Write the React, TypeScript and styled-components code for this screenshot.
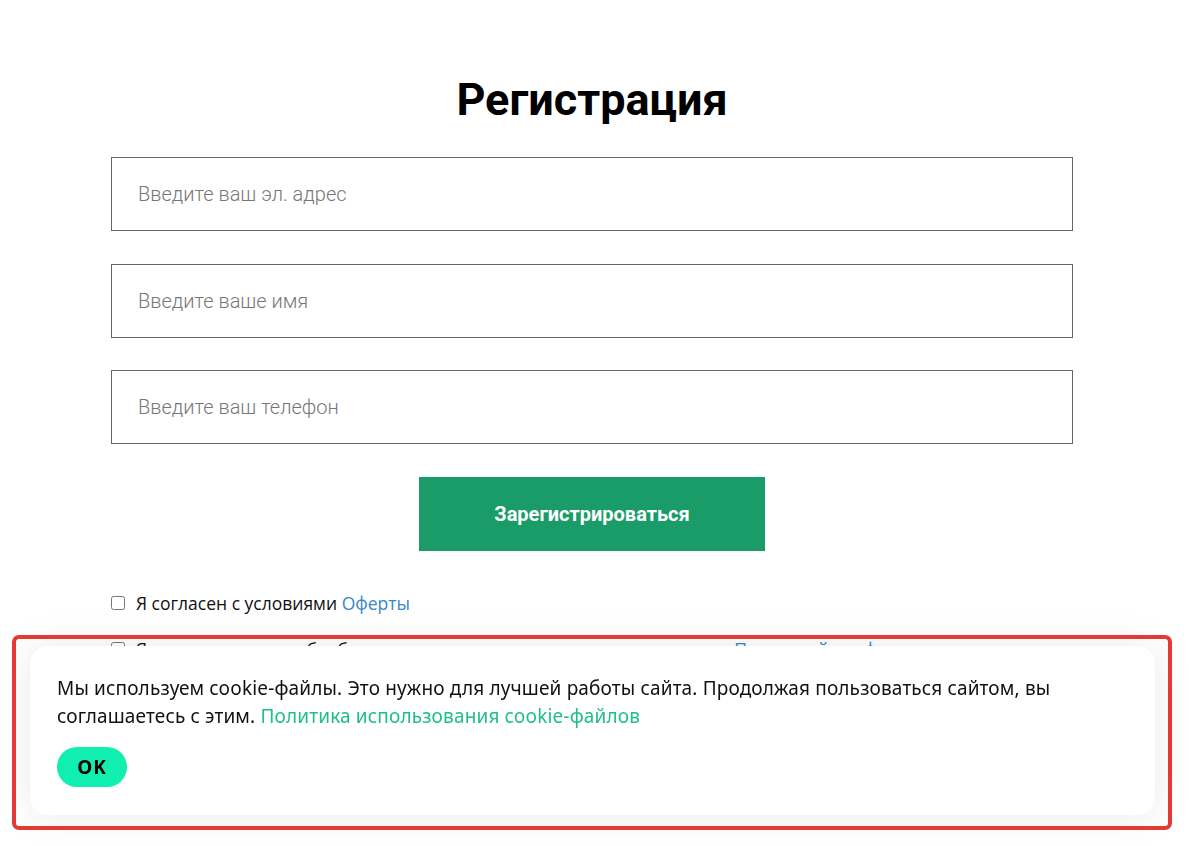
import styled, { createGlobalStyle } from 'styled-components';

const GlobalStyle = createGlobalStyle`
  html, body {
    margin: 0;
    padding: 0;
    background: #ffffff;
  }
  * {
    box-sizing: border-box;
  }
`;

const Page = styled.main`
  width: 962px;
  margin: 0 0 0 111px;
  padding-top: 70px;
  display: flex;
  flex-direction: column;
  font-family: Roboto, 'Liberation Sans', sans-serif;
`;

const Title = styled.h1`
  margin: 0 0 27px;
  text-align: center;
  font-size: 45px;
  line-height: 60px;
  font-weight: 700;
  color: #000;
`;

const Form = styled.form`
  display: flex;
  flex-direction: column;
  gap: 32.5px;
`;

const Field = styled.input`
  height: 74px;
  width: 100%;
  padding: 0 26px;
  border: 1px solid #666;
  border-radius: 0;
  font-family: Roboto, 'Liberation Sans', sans-serif;
  font-size: 20px;
  font-weight: 300;
  color: #333;
  outline: none;

  &::placeholder {
    color: #777;
  }
`;

const Submit = styled.button.attrs({ type: 'button' })`
  align-self: center;
  width: 346px;
  height: 74px;
  border: none;
  background: #1a9c69;
  color: #fff;
  font-family: Roboto, 'Liberation Sans', sans-serif;
  font-size: 20px;
  font-weight: 700;
  cursor: pointer;
`;

const Agreements = styled.div`
  margin-top: 38px;
  display: flex;
  flex-direction: column;
  gap: 18px;
`;

const Check = styled.label`
  display: flex;
  align-items: center;
  gap: 11px;
  font-family: 'Open Sans', 'Noto Sans', sans-serif;
  font-size: 17.5px;
  line-height: 28px;
  color: #111;

  input {
    margin: 0;
    width: 14px;
    height: 14px;
  }
`;

const TextLink = styled.a`
  color: #3a86c8;
  text-decoration: none;
`;

const Banner = styled.div`
  position: fixed;
  left: 30px;
  right: 34px;
  bottom: 31px;
  padding: 28px 27px;
  background: #fff;
  border-radius: 18px;
  box-shadow: 0 0 40px rgba(0, 0, 0, 0.09);
  display: flex;
  flex-direction: column;
  align-items: flex-start;
  gap: 17px;
  font-family: 'Noto Sans', sans-serif;
`;

const BannerText = styled.p`
  margin: 0;
  font-size: 19px;
  letter-spacing: 0.15px;
  line-height: 28px;
  color: #111;
`;

const CookieLink = styled.a`
  color: #1fbf8b;
  text-decoration: none;
`;

const OkButton = styled.button.attrs({ type: 'button' })`
  width: 70px;
  height: 40px;
  border: none;
  border-radius: 20px;
  background: #10efb0;
  color: #000;
  font-family: 'Noto Sans', sans-serif;
  font-size: 19px;
  font-weight: 700;
  letter-spacing: 1px;
  cursor: pointer;
`;

const Highlight = styled.div`
  position: fixed;
  left: 12px;
  top: 635px;
  width: 1160px;
  height: 195px;
  border: 4px solid #e53935;
  border-radius: 7px;
  pointer-events: none;
`;

export default function App() {
  return (
    <>
      <GlobalStyle />
      <Page>
        <Title>Регистрация</Title>
        <Form>
          <Field placeholder="Введите ваш эл. адрес" />
          <Field placeholder="Введите ваше имя" />
          <Field placeholder="Введите ваш телефон" />
          <Submit>Зарегистрироваться</Submit>
        </Form>
        <Agreements>
          <Check>
            <input type="checkbox" />
            <span>
              Я согласен с условиями <TextLink href="#">Оферты</TextLink>
            </span>
          </Check>
          <Check>
            <input type="checkbox" />
            <span>
              Я даю согласие на обработку персональных данных в соответствии с{' '}
              <TextLink href="#">Политикой конфиденциальности</TextLink>
            </span>
          </Check>
        </Agreements>
      </Page>
      <Banner>
        <BannerText>
          Мы используем cookie-файлы. Это нужно для лучшей работы сайта. Продолжая пользоваться сайтом, вы
          соглашаетесь с этим. <CookieLink href="#">Политика использования cookie-файлов</CookieLink>
        </BannerText>
        <OkButton>OK</OkButton>
      </Banner>
      <Highlight />
    </>
  );
}
